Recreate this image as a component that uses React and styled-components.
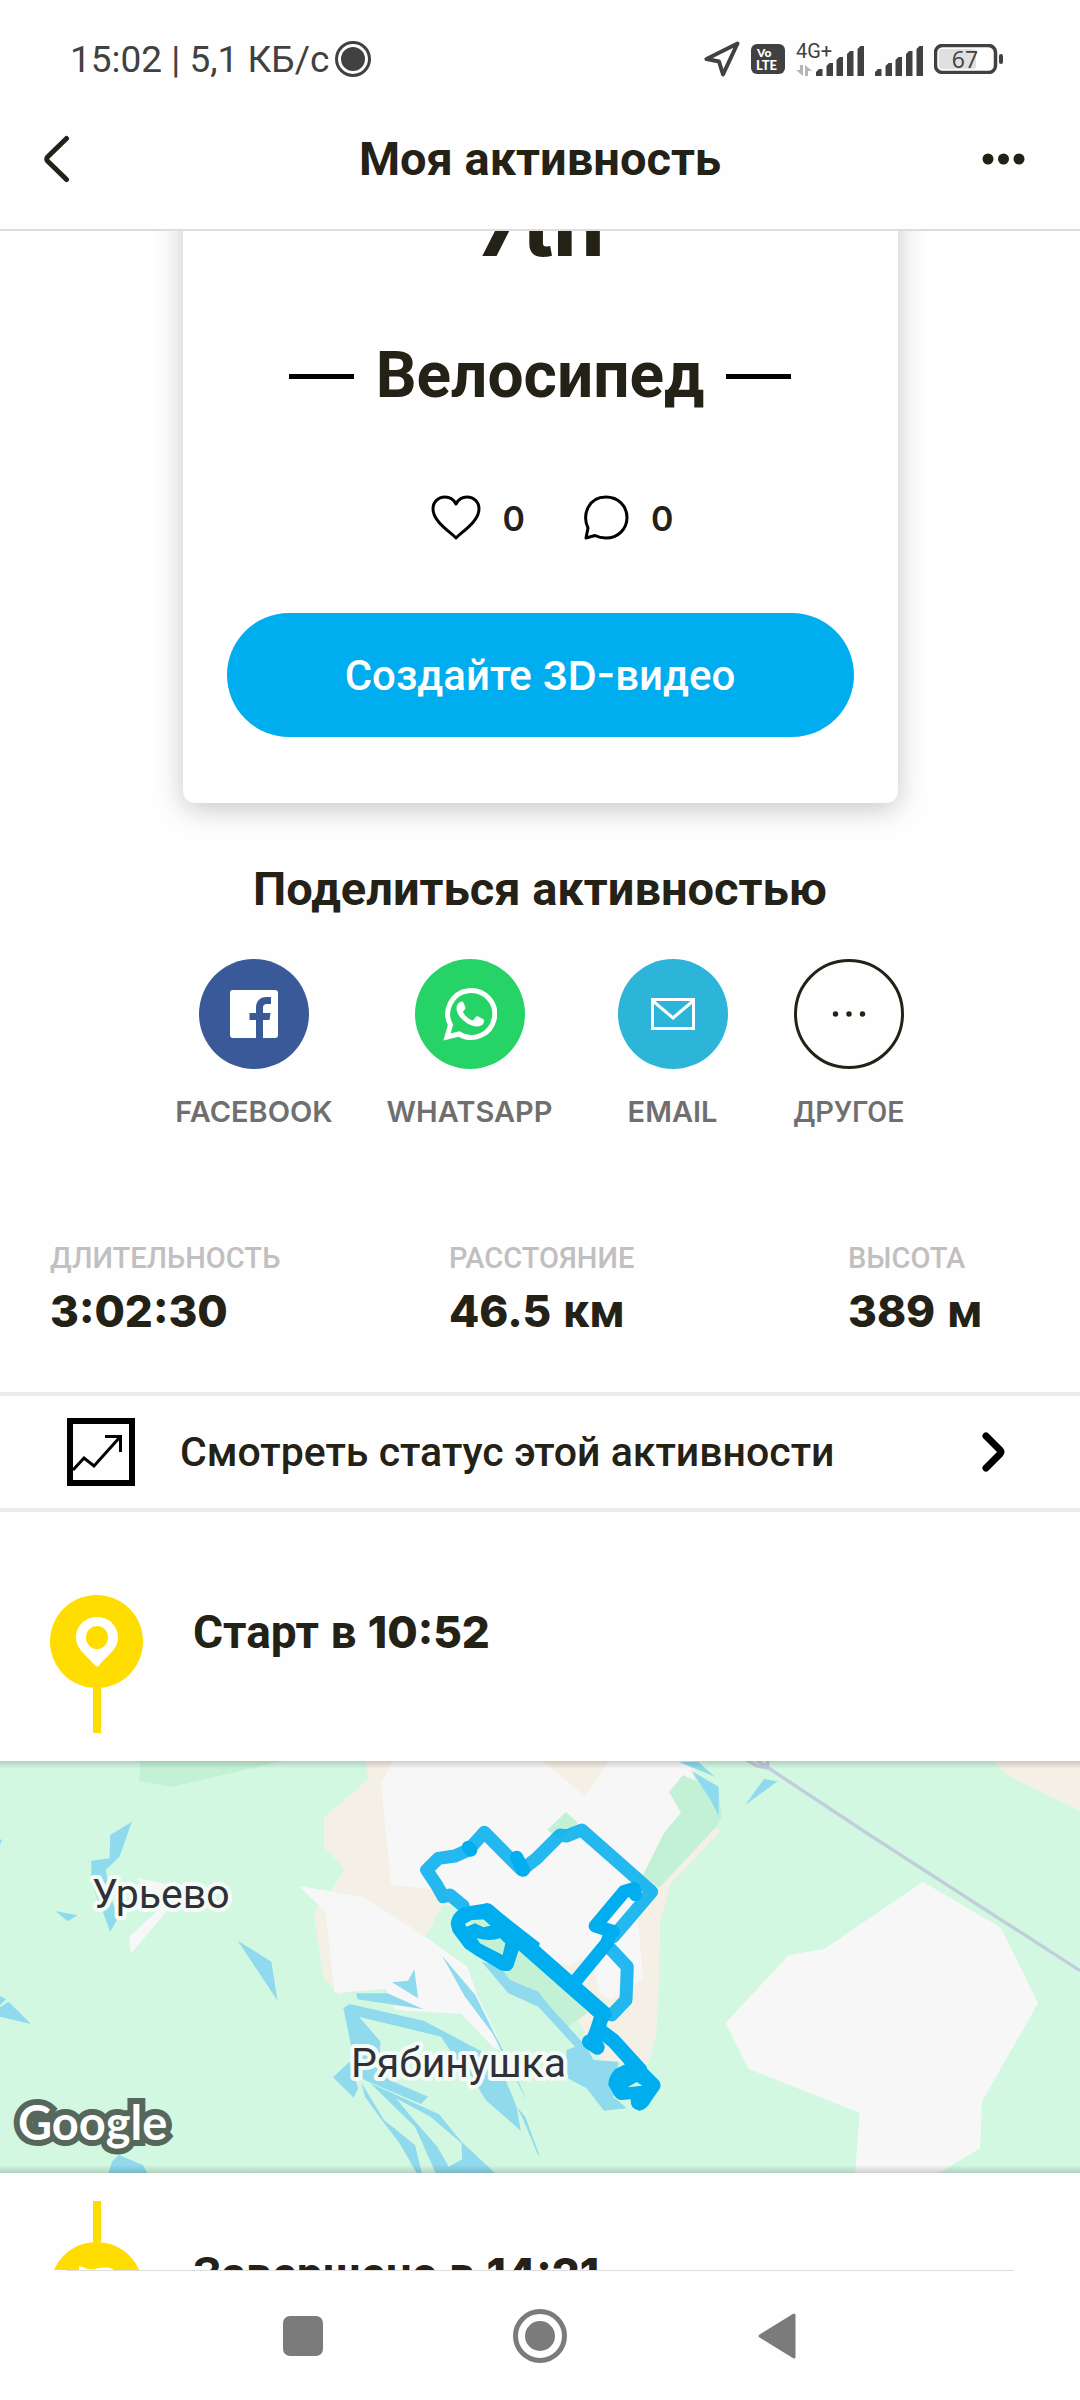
import React from "react";
import styled, { createGlobalStyle } from "styled-components";

const ink = "#242116";
const blue = "#00adee";
const yellow = "#ffdd00";

const GlobalStyle = createGlobalStyle`
  * { box-sizing: border-box; }
  body {
    margin: 0;
    background: #fefefe;
    color: ${ink};
    font-family: Roboto, "Noto Sans", sans-serif;
  }
  button { font: inherit; color: inherit; border: 0; padding: 0; background: none; cursor: pointer; }
  a { color: inherit; text-decoration: none; }
  h1, h2, p, dl, dd { margin: 0; }
  svg { display: block; flex: none; }
`;

const Screen = styled.div`
  display: flex;
  flex-direction: column;
  height: 100vh;
  overflow: hidden;
`;

const StatusBar = styled.div`
  display: flex;
  align-items: center;
  justify-content: space-between;
  flex: none;
  height: 90px;
  padding: 28px 76px 0 70px;
  color: #414141;
  font-size: 37px;
`;

const StatusGroup = styled.div`
  display: flex;
  align-items: center;
  gap: ${(p) => p.$gap}px;
`;

const Network = styled.div`
  display: flex;
  align-items: flex-end;
  gap: 2px;
  height: 34px;
`;

const NetworkType = styled.div`
  display: flex;
  flex-direction: column;
  width: 18px;
  height: 34px;
  justify-content: space-between;
  font-size: 20px;
  line-height: 18px;
`;

const AppBar = styled.header`
  display: flex;
  align-items: center;
  justify-content: space-between;
  flex: none;
  height: 141px;
  padding: 0 44px 2px;
  border-bottom: 2px solid #dddddd;
`;

const AppTitle = styled.h1`
  font-size: 47px;
  line-height: 56px;
  font-weight: 700;
`;

const IconButton = styled.button`
  display: flex;
  align-items: center;
  justify-content: ${(p) => p.$align || "center"};
  width: 54px;
  height: 60px;
`;

const Content = styled.main`
  flex: 1;
  min-height: 0;
  overflow: hidden;
`;

const Card = styled.section`
  display: flex;
  flex-direction: column;
  align-items: center;
  max-width: 715px;
  margin: -60px auto 0;
  padding: 12px 44px 66px;
  border-radius: 12px;
  background: #ffffff;
  box-shadow: 0 6px 28px rgba(0, 0, 0, 0.22);
`;

const Rank = styled.p`
  font-family: Inter, sans-serif;
  font-size: 80px;
  line-height: 88px;
  font-weight: 800;
`;

const Sport = styled.h2`
  display: flex;
  align-items: center;
  gap: 22px;
  margin-top: 67px;
  font-size: 64px;
  line-height: 76px;
  font-weight: 700;

  &::before,
  &::after {
    content: "";
    width: 65px;
    height: 5px;
    background: #000000;
  }
`;

const Reactions = styled.div`
  display: flex;
  gap: 58px;
  height: 50px;
  margin-top: 79px;
  padding-left: 24px;
`;

const Reaction = styled.button`
  display: flex;
  align-items: center;
  gap: 22px;
  font-family: Inter, sans-serif;
  font-size: 34px;
  font-weight: 600;
`;

const PrimaryButton = styled.button`
  width: 100%;
  height: 124px;
  margin-top: 70px;
  border-radius: 62px;
  background: ${blue};
  color: #ffffff;
  font-size: 42px;
  font-weight: 500;
`;

const Num = styled.span`
  font-family: Inter, sans-serif;
  font-size: ${(p) => p.$size || 44}px;
  line-height: 1;
  font-weight: ${(p) => p.$weight || 800};
`;

const Share = styled.section`
  display: flex;
  flex-direction: column;
  align-items: center;
  gap: 42px;
  margin-top: 58px;
`;

const ShareTitle = styled.h2`
  font-size: 47px;
  line-height: 56px;
  font-weight: 700;
`;

const ShareList = styled.div`
  display: grid;
  grid-template-columns: 155px 164px 130px 110px;
  gap: 56px;
`;

const ShareButton = styled.button`
  display: flex;
  flex-direction: column;
  align-items: center;
  gap: 25px;
  color: #6f6f6f;
  font-family: ${(p) => (p.$cyrillic ? "Roboto" : "Inter")}, sans-serif;
  font-size: 29px;
  line-height: 36px;
  font-weight: ${(p) => (p.$cyrillic ? 500 : 600)};
`;

const Disc = styled.span`
  display: flex;
  align-items: center;
  justify-content: center;
  width: 110px;
  height: 110px;
  border-radius: 50%;
  border: ${(p) => (p.$outlined ? `3px solid ${ink}` : "0")};
  background: ${(p) => p.$color || "transparent"};
`;

const Stats = styled.dl`
  display: grid;
  grid-template-columns: 1fr 1fr 182px;
  margin-top: 110px;
  padding: 0 50px 53px;
`;

const Stat = styled.div`
  display: flex;
  flex-direction: column;
  gap: 7px;
`;

const StatLabel = styled.dt`
  color: #c1bfbf;
  font-size: 29px;
  line-height: 36px;
  font-weight: 500;
`;

const StatValue = styled.dd`
  font-size: 47px;
  line-height: 56px;
  font-weight: 700;
  white-space: nowrap;
`;

const StatusLink = styled.a`
  display: flex;
  align-items: center;
  gap: 45px;
  height: 120px;
  padding: 0 73px 0 67px;
  border: solid #ececec;
  border-width: 4px 0;
  font-size: 41px;
  font-weight: 500;
`;

const LinkText = styled.span`
  flex: 1;
`;

const TimelineRow = styled.section`
  display: flex;
  gap: 50px;
  padding: ${(p) => (p.$end ? "28px 50px 0" : "83px 50px 28px")};
`;

const Marker = styled.div`
  display: flex;
  flex-direction: ${(p) => (p.$end ? "column-reverse" : "column")};
  align-items: center;
`;

const MarkerDisc = styled.div`
  display: flex;
  align-items: center;
  justify-content: center;
  width: 93px;
  height: 93px;
  border-radius: 50%;
  background: ${yellow};
`;

const MarkerStem = styled.div`
  width: 8px;
  height: ${(p) => (p.$end ? 41 : 45)}px;
  background: ${yellow};
`;

const TimelineText = styled.h2`
  padding-top: ${(p) => (p.$end ? 45 : 9)}px;
  font-size: 46px;
  line-height: 56px;
  font-weight: 700;
`;

const MapFrame = styled.div`
  position: relative;
  overflow: hidden;

  &::after {
    content: "";
    position: absolute;
    inset: 0;
    background:
      linear-gradient(rgba(0, 0, 0, 0.16), transparent) top / 100% 8px no-repeat,
      linear-gradient(transparent, rgba(0, 0, 0, 0.16)) bottom / 100% 8px no-repeat;
    pointer-events: none;
  }

  svg { width: 100%; height: auto; }
`;

const BottomRule = styled.div`
  flex: none;
  height: 1px;
  margin: 0 66px;
  background: #dedede;
`;

const SystemNav = styled.nav`
  display: flex;
  align-items: center;
  justify-content: center;
  gap: 183px;
  flex: none;
  height: 129px;
`;

function Bars() {
  return (
    <svg width="48" height="30" viewBox="0 0 48 30" fill="#414141">
      <path d="M0 30V26L3 23H6.500V30ZM10.500 30V20L13.500 17H17V30ZM20.500 30V14L23.500 11H27V30ZM31 30V8L34 5H37.500V30ZM41.500 30V3L44.500 0H48V30Z" />
    </svg>
  );
}

function StatusIcons() {
  return (
    <StatusGroup $gap={11}>
      <svg width="36" height="36" viewBox="0 0 36 36" fill="none" stroke="#414141" strokeWidth="4" strokeLinejoin="round">
        <path d="M33.500 2.500 2.500 18 15 20.500 19 33.500Z" />
      </svg>
      <svg width="34" height="30" viewBox="0 0 34 30">
        <rect width="34" height="30" rx="6" fill="#414141" />
        <g fill="#fff" fontFamily="Lato, sans-serif" fontWeight="900">
          <text x="6" y="13" fontSize="12">Vo</text>
          <text x="5" y="26" fontSize="13">LTE</text>
        </g>
      </svg>
      <Network>
        <NetworkType>
          <span>4G+</span>
          <svg width="16" height="11" viewBox="0 0 16 11" fill="#b5b5b5">
            <path d="M4 0H7V11L0 5H4ZM9 11V0L16 6H12V11Z" />
          </svg>
        </NetworkType>
        <Bars />
      </Network>
      <Network>
        <Bars />
      </Network>
      <svg width="70" height="30" viewBox="0 0 70 30">
        <rect x="5" y="5" width="37" height="20" rx="3" fill="#e0e0e0" />
        <rect x="1.500" y="1.500" width="60" height="27" rx="7" fill="none" stroke="#414141" strokeWidth="3.500" />
        <rect x="65" y="10" width="4" height="10" rx="2" fill="#414141" />
        <text x="31" y="24" textAnchor="middle" fill="#414141" fontFamily="Open Sans, sans-serif" fontSize="23">67</text>
      </svg>
    </StatusGroup>
  );
}

function ActivityMap() {
  return (
    <MapFrame>
      <svg viewBox="0 0 1080 412" role="img" aria-label="Карта маршрута">
        <rect width="1080" height="412" fill="#d3f8e2" />
        <g fill="#f5f0e5">
          <path d="M365 0 369 18 324 56V86L345 108 331 130 363 136 425 176 443 144 487 149 578 240 588 252 578 259 600 299 617 301 647 306 656 276 659 222 660 162 671 122 721 70 716 66 643 114 670 40 703 0Z" />
          <path d="M994 0H1080V50L1005 13Z" />
        </g>
        <g fill="#f7f7f7">
          <path d="M393 0 381 22 391 124 440 129 460 150 487 149 545 200 568 204 586 197 595 212 600 232 611 239 643 217 638 159 643 114 664 72 681 52 695 20 688 0Z" />
        </g>
        <path fill="#f5f0e5" d="M542 0H609L585 35Z" />
        <g fill="#c3f1d5">
          <path d="M683 14 669 31 681 52 664 72 643 114 659 127 716 66 722 56 719 36 700 22Z" />
          <path d="M566 51 547 69 561 79 578 62Z" />
          <path d="M465 150 517 180 587 252 567 266 538 246 490 206Z" />
        </g>
        <g transform="scale(.3444 .3333) translate(0 -33)">
          <path fill="#c3f1d5" d="M408 33H820L500 110 404 92Z" />
          <path fill="#f5f0e5" d="M925 465 912 495 940 685 985 735 1000 728 960 465Z" />
          <g fill="#f7f7f7">
            <path d="M868 408 1055 440 1235 560 1357 650 1385 735 1440 850 1450 900 1430 890 1340 792 1148 780 1120 717 972 728 945 485Z" />
            <path d="M398 384 540 415 380 612 375 560 470 470 430 420Z" />
          </g>
          <g fill="#90daee">
            <path d="M383 215 320 255 318 325 265 332V400L300 490 320 545 345 500 320 440 307 360 347 320Z" />
            <path d="M160 483 225 496 197 514ZM690 572 788 635 806 752ZM0 268 6 270 0 285ZM0 738 18 748 0 765ZM0 772 25 755 90 822 0 800Z" />
            <path d="M1203 657 1214 745 1138 697 1185 692ZM1034 730H1125L1230 778 1038 748Z" />
            <path d="M997 775 1015 762 1230 812 1400 905 1440 920 1500 1070 1512 1142 1410 1050 1370 980 1320 920 1280 860 1042 800 1105 875 1100 960 1130 990 1243 1040 1222 1062 1080 1000 1040 980 1020 890Z" />
            <path d="M1015 935 967 982 1027 1043 1040 1015ZM1050 1000 1115 1110 1205 1185 1225 1269H1210L1160 1180 1105 1105 1060 1040Z" />
            <path fillRule="evenodd" d="M1075 1000 1275 1093 1340 1175 1437 1269H1265L1205 1130 1145 1070ZM1150 1045 1250 1100 1340 1180 1342 1228 1303 1250 1270 1190 1210 1120Z" />
            <path d="M1284 618 1380 735 1440 860 1500 980 1530 1055 1480 950 1430 850 1350 740ZM1500 1070 1525 1100 1568 1220 1560 1210 1520 1110Z" />
            <path d="M315 1269 325 1235 345 1215 415 1245 427 1269Z" />
          </g>
        </g>
        <g transform="translate(540 0) scale(.3444 .3333) translate(0 -33)">
          <path fill="#90daee" d="M404 36H460L508 80ZM441 64 519 110V197L495 150ZM650 87 690 94 596 165Z" />
          <path fill="#f7f7f7" d="M1112 395 1338 533 1446 760 1283 1055 1278 1195 1157 1269H915L928 1088 606 957 539 818 722 616 825 597Z" />
          <path fill="none" stroke="#c0cddc" strokeWidth="10" d="M600 30 630 48 665 55 950 250 1568 662M630 33 660 50 662 30" />
        </g>
        <g transform="translate(400 39) scale(.33333)">
          <path fill="#90daee" d="M245 485 300 500 330 540 415 575 450 620 560 740 580 780 655 785 650 850 640 890 680 925 612 932 560 865 495 830 500 750 525 740 415 620 325 580Z" />
          <g fill="none" stroke={blue} strokeWidth="39" strokeLinejoin="round" strokeLinecap="round">
            <g opacity=".86">
              <path d="M190 318 150 285 130 290 110 255 80 210 115 175 165 168 205 150 253 97 365 210 410 175 480 105 500 108 545 90 755 275 640 410M630 445 682 500 678 600 635 645" />
            </g>
            <path strokeWidth="50" d="M262 335 610 642" />
            <path strokeWidth="40" d="M350 172 370 210M205 142 212 150M640 395 586 378 672 275 702 266 706 284M632 395 620 430 525 545" />
            <path strokeWidth="44" d="M608 640 592 690 578 725 592 742 568 725M608 698 640 722 720 810" />
          </g>
          <g fill={blue} fillRule="evenodd">
            <path d="M262 310 195 320Q155 335 152 372L158 395 195 445 225 465 300 510Q330 520 340 500L356 450 400 480 420 430 280 320ZM195 372 215 360 260 358 277 376 250 382 225 370 200 380ZM230 415Q270 425 300 415L316 430 308 465 240 430Z" />
            <path d="M690 785 645 808Q625 830 625 855L642 885Q650 900 665 900L692 898Q690 928 718 932 740 928 752 905L780 865Q785 850 775 840L715 780ZM683 862 710 846 727 857Z" />
          </g>
        </g>
        <g fill="#303038" stroke="#f4fbf7" strokeWidth="8" strokeLinejoin="round" paintOrder="stroke" fontFamily="Roboto, sans-serif" fontSize="41">
          <text x="92" y="147">Урьево</text>
          <text x="351" y="316">Рябинушка</text>
        </g>
        <text x="18" y="379" fill="#fff" stroke="#56675c" strokeWidth="12" paintOrder="stroke" fontFamily="Lato, sans-serif" fontWeight="700" fontSize="47">Google</text>
      </svg>
    </MapFrame>
  );
}

export default function App() {
  return (
    <Screen>
      <GlobalStyle />
      <StatusBar>
        <StatusGroup $gap={6}>
          <span>15:02 | 5,1 КБ/с</span>
          <svg width="36" height="36" viewBox="0 0 36 36">
            <circle cx="18" cy="18" r="16.500" fill="none" stroke="#414141" strokeWidth="3" />
            <circle cx="18" cy="18" r="12" fill="#414141" />
          </svg>
        </StatusGroup>
        <StatusIcons />
      </StatusBar>

      <AppBar>
        <IconButton aria-label="Назад" $align="flex-start">
          <svg width="26" height="50" viewBox="6 0 26 50" fill="none" stroke={ink} strokeWidth="5" strokeLinecap="round" strokeLinejoin="round">
            <path d="M28.500 4.500 9.500 23Q8 25 9.500 27L28.500 45.500" />
          </svg>
        </IconButton>
        <AppTitle>Моя активность</AppTitle>
        <IconButton aria-label="Ещё" $align="flex-start">
          <svg width="44" height="12" viewBox="0 0 44 12" fill={ink}>
            <circle cx="6" cy="6" r="5.500" />
            <circle cx="21.500" cy="6" r="5.500" />
            <circle cx="37" cy="6" r="5.500" />
          </svg>
        </IconButton>
      </AppBar>

      <Content>
        <Card>
          <Rank>7th</Rank>
          <Sport>Велосипед</Sport>
          <Reactions>
            <Reaction aria-label="Нравится: 0">
              <svg width="50" height="46" viewBox="0 0 50 46" fill="none" stroke="#000" strokeWidth="3" strokeLinejoin="round">
                <path d="M25 43C18 36 2 26 2 14 2 7 7 2 14 2 19 2 23 5 25 9 27 5 31 2 36 2 43 2 48 7 48 14 48 26 32 36 25 43Z" />
              </svg>
              <span>0</span>
            </Reaction>
            <Reaction aria-label="Комментарии: 0">
              <svg width="46" height="46" viewBox="0 0 46 46" fill="none" stroke="#000" strokeWidth="3" strokeLinejoin="round">
                <path d="M3 43 5 33C-1 20 5 2 23 2 35 2 44 11 44 22.500 44 34 35 43 23 43 18 43 15 42 12 40.500Z" />
              </svg>
              <span>0</span>
            </Reaction>
          </Reactions>
          <PrimaryButton>
            Создайте <Num $size={40} $weight={600}>3D-</Num>видео
          </PrimaryButton>
        </Card>

        <Share>
          <ShareTitle>Поделиться активностью</ShareTitle>
          <ShareList>
            <ShareButton>
              <Disc $color="#3a5999">
                <svg width="48" height="48" viewBox="0 0 48 48">
                  <rect width="48" height="48" rx="3" fill="#fff" />
                  <path fill="#3a5999" d="M26 48V30H19.500V23H26V18C26 11 30 7 36 7H41V14H37C34 14 33 15.500 33 18V23H40.500L39.500 30H33V48Z" />
                </svg>
              </Disc>
              FACEBOOK
            </ShareButton>
            <ShareButton>
              <Disc $color="#25d366">
                <svg width="54" height="54" viewBox="0 0 54 54">
                  <path fill="none" stroke="#fff" strokeWidth="5" strokeLinejoin="miter" d="M4 50 7.500 38A23.500 23.500 0 1 1 16 47Z" />
                  <path fill="#fff" d="M19 14.500C17 14.500 13.500 17 13.500 21.500 13.500 29 24 39 34 39.500 38 39.500 41 37 41 34.500 41 32 41 32.500 35 29.500 33.500 29 33 29.500 30.500 33 30 33.500 29.500 33.500 28.500 33 24 31 21.500 28 20 25 20 24 22.500 22.500 22.500 20.500 21.500 18 20.500 14.500 19 14.500Z" />
                </svg>
              </Disc>
              WHATSAPP
            </ShareButton>
            <ShareButton>
              <Disc $color="#2cb5d9">
                <svg width="44" height="32" viewBox="0 0 44 32" fill="none" stroke="#fff" strokeWidth="3">
                  <path d="M1.500 1.500H42.500V30.500H1.500ZM2 3 22 20 42 3" />
                </svg>
              </Disc>
              EMAIL
            </ShareButton>
            <ShareButton $cyrillic>
              <Disc $outlined>
                <svg width="34" height="6" viewBox="0 0 34 6" fill={ink}>
                  <circle cx="3.500" cy="3" r="2.700" />
                  <circle cx="17" cy="3" r="2.700" />
                  <circle cx="30.500" cy="3" r="2.700" />
                </svg>
              </Disc>
              ДРУГОЕ
            </ShareButton>
          </ShareList>
        </Share>

        <Stats>
          <Stat>
            <StatLabel>ДЛИТЕЛЬНОСТЬ</StatLabel>
            <StatValue><Num>3:02:30</Num></StatValue>
          </Stat>
          <Stat>
            <StatLabel>РАССТОЯНИЕ</StatLabel>
            <StatValue><Num>46.5</Num> км</StatValue>
          </Stat>
          <Stat>
            <StatLabel>ВЫСОТА</StatLabel>
            <StatValue><Num>389</Num> м</StatValue>
          </Stat>
        </Stats>

        <StatusLink href="#status">
          <svg width="68" height="68" viewBox="0 0 68 68" fill="none" stroke="#000">
            <rect x="3" y="3" width="62" height="62" strokeWidth="6" />
            <path strokeWidth="3" d="M6 52 17 40 27 48 53 19M38 18.500H53.500V34" />
          </svg>
          <LinkText>Смотреть статус этой активности</LinkText>
          <svg width="26" height="40" viewBox="0 0 26 40" fill="none" stroke="#000" strokeWidth="7" strokeLinecap="round" strokeLinejoin="round">
            <path d="M5 4 19 18Q21 20 19 22L5 36" />
          </svg>
        </StatusLink>

        <TimelineRow>
          <Marker>
            <MarkerDisc>
              <svg width="42" height="50" viewBox="0 0 42 50">
                <path fill="#fff" fillRule="evenodd" d="M21 0C9 0 0 9 0 20.500 0 33 12 39 18.500 48Q21 51 23.500 48C30 39 42 33 42 20.500 42 9 33 0 21 0ZM21 9A11 11.500 0 1 1 21 32 11 11.500 0 1 1 21 9Z" />
              </svg>
            </MarkerDisc>
            <MarkerStem />
          </Marker>
          <TimelineText>Старт в <Num>10:52</Num></TimelineText>
        </TimelineRow>

        <ActivityMap />

        <TimelineRow $end>
          <Marker $end>
            <MarkerDisc>
              <svg width="36" height="46" viewBox="0 0 36 46" fill="#fff">
                <path d="M0 0 4 1C14 7 22-2 34 3L31 15 35 26C23 22 15 31 5 25V46H0Z" />
              </svg>
            </MarkerDisc>
            <MarkerStem $end />
          </Marker>
          <TimelineText $end>Завершено в <Num>14:21</Num></TimelineText>
        </TimelineRow>
      </Content>

      <BottomRule />
      <SystemNav>
        <IconButton aria-label="Недавние">
          <svg width="40" height="40" viewBox="0 0 40 40"><rect width="40" height="40" rx="7" fill="#7b7b7b" /></svg>
        </IconButton>
        <IconButton aria-label="Домой">
          <svg width="54" height="54" viewBox="0 0 54 54">
            <circle cx="27" cy="27" r="24.500" fill="none" stroke="#7b7b7b" strokeWidth="5" />
            <circle cx="27" cy="27" r="15" fill="#7b7b7b" />
          </svg>
        </IconButton>
        <IconButton aria-label="Назад">
          <svg width="38" height="46" viewBox="0 0 38 46"><path d="M36 2V44L2 23Z" fill="#7b7b7b" stroke="#7b7b7b" strokeWidth="3" strokeLinejoin="round" /></svg>
        </IconButton>
      </SystemNav>
    </Screen>
  );
}
